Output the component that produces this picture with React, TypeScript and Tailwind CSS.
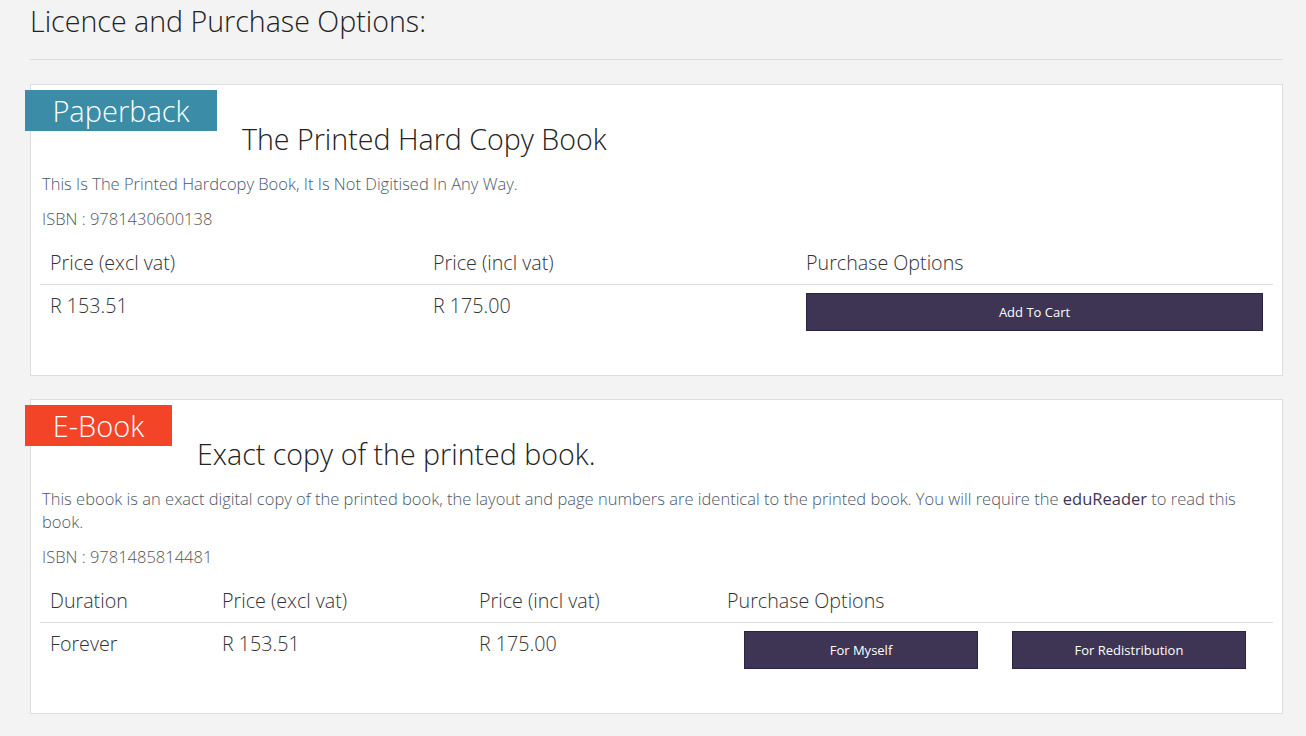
import React from 'react';

const font = { fontFamily: '"Open Sans", "Liberation Sans", sans-serif' };

function Badge({ label, className }: { label: string; className: string }) {
  return (
    <div
      className={`-ml-[6px] mt-[5px] h-[41px] shrink-0 text-center text-[29px] font-light leading-[41px] text-white ${className}`}
    >
      {label}
    </div>
  );
}

function BuyButton({ label, className = '' }: { label: string; className?: string }) {
  return (
    <button
      className={`h-[38px] border border-[#2a2440] bg-[#3d3553] text-[13px] font-normal text-white ${className}`}
    >
      {label}
    </button>
  );
}

export default function App() {
  return (
    <div className="min-h-screen bg-[#f3f3f3] pl-[30px] pr-[23px] pt-[4px] pb-[22px]" style={font}>
      <h2 className="text-[28.6px] font-light leading-[33px] text-[#222]">Licence and Purchase Options:</h2>
      <hr className="mt-[22px] border-t border-[#dcdcdc]" />

      {/* Paperback */}
      <div className="mt-[24px] border border-[#dddddd] bg-white pb-[36px]">
        <div className="flex items-start">
          <Badge label="Paperback" className="w-[192px] bg-[#3b8ca6]" />
          <h3 className="ml-[25px] mt-[38px] text-[28.6px] font-light leading-[32px] text-[#222]">
            The Printed Hard Copy Book
          </h3>
        </div>
        <p className="mt-[17px] px-[11px] text-[16.5px] font-light leading-[23px] text-[#4b5868]">
          This Is The Printed Hardcopy Book, It Is Not Digitised In Any Way.
        </p>
        <p className="mt-[12px] px-[11px] text-[16.5px] font-light leading-[23px] text-[#555]">
          ISBN : 9781430600138
        </p>
        <div className="mx-[9px] mt-[12px] text-[19.7px] font-light leading-[26px] text-[#333]">
          <div className="grid grid-cols-[383px_373px_1fr] border-b border-[#dddddd]">
            <div className="px-[10px] py-[8px]">Price (excl vat)</div>
            <div className="px-[10px] py-[8px]">Price (incl vat)</div>
            <div className="px-[10px] py-[8px]">Purchase Options</div>
          </div>
          <div className="grid grid-cols-[383px_373px_1fr]">
            <div className="px-[10px] py-[8px]">R 153.51</div>
            <div className="px-[10px] py-[8px]">R 175.00</div>
            <div className="px-[10px] py-[8px]">
              <BuyButton label="Add To Cart" className="w-full" />
            </div>
          </div>
        </div>
      </div>

      {/* E-Book */}
      <div className="mt-[23px] border border-[#dddddd] bg-white pb-[36px]">
        <div className="flex items-start">
          <Badge label="E-Book" className="w-[147px] bg-[#f44427]" />
          <h3 className="ml-[25px] mt-[38px] text-[28.6px] font-light leading-[32px] text-[#222]">
            Exact copy of the printed book.
          </h3>
        </div>
        <p className="mt-[17px] px-[11px] text-[16.5px] font-light leading-[23px] text-[#4b5868]">
          This ebook is an exact digital copy of the printed book, the layout and page numbers are identical to the
          printed book. You will require the <span className="font-normal text-[#3d3553]">eduReader</span> to read
          this book.
        </p>
        <p className="mt-[12px] px-[11px] text-[16.5px] font-light leading-[23px] text-[#555]">
          ISBN : 9781485814481
        </p>
        <div className="mx-[9px] mt-[12px] text-[19.7px] font-light leading-[26px] text-[#333]">
          <div className="grid grid-cols-[172px_257px_248px_1fr] border-b border-[#dddddd]">
            <div className="px-[10px] py-[8px]">Duration</div>
            <div className="px-[10px] py-[8px]">Price (excl vat)</div>
            <div className="px-[10px] py-[8px]">Price (incl vat)</div>
            <div className="px-[10px] py-[8px]">Purchase Options</div>
          </div>
          <div className="grid grid-cols-[172px_257px_248px_1fr]">
            <div className="px-[10px] py-[8px]">Forever</div>
            <div className="px-[10px] py-[8px]">R 153.51</div>
            <div className="px-[10px] py-[8px]">R 175.00</div>
            <div className="grid grid-cols-2 px-[10px] py-[8px]">
              <div className="flex justify-center">
                <BuyButton label="For Myself" className="w-[234px]" />
              </div>
              <div className="flex justify-center">
                <BuyButton label="For Redistribution" className="w-[234px]" />
              </div>
            </div>
          </div>
        </div>
      </div>
    </div>
  );
}
